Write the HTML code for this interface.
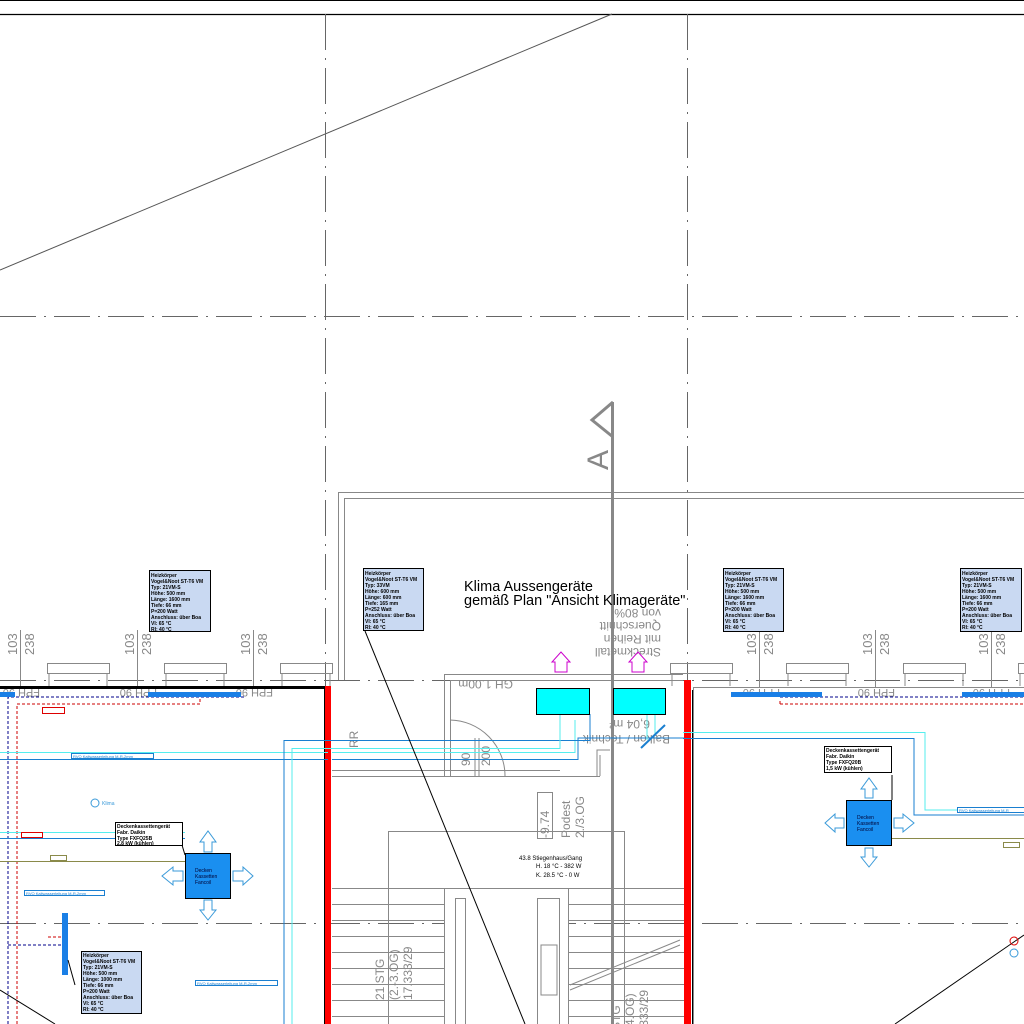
<!DOCTYPE html>
<html><head><meta charset="utf-8"><style>
html,body{margin:0;padding:0;background:#fff;width:1024px;height:1024px;overflow:hidden}
svg{display:block}
text{font-family:"Liberation Sans",sans-serif}
.t{font-size:5px;font-weight:bold;fill:#000}
.dim{font-size:13px;fill:#888}
</style></head><body>
<svg width="1024" height="1024" viewBox="0 0 1024 1024" xmlns="http://www.w3.org/2000/svg">
<rect width="1024" height="1024" fill="#fff"/>
<!-- top border -->
<line x1="0" y1="0.5" x2="1024" y2="0.5" stroke="#000"/>
<line x1="0" y1="14.5" x2="1024" y2="14.5" stroke="#000" stroke-width="1.2"/>
<line x1="0" y1="270" x2="612" y2="14" stroke="#555" stroke-width="1"/>
<!-- axis dash-dot lines -->
<g stroke="#666" stroke-width="1" stroke-dasharray="36,8,2,8">
<line x1="325.5" y1="14" x2="325.5" y2="690"/>
<line x1="687.5" y1="14" x2="687.5" y2="690"/>
<line x1="0" y1="316.5" x2="1024" y2="316.5"/>
<line x1="0" y1="680.5" x2="1024" y2="680.5"/>
<line x1="0" y1="923.5" x2="1024" y2="923.5"/>
</g>
<!-- building outline -->
<g stroke="#888" fill="none" stroke-width="1">
<path d="M338.5 680 V492.5 H1024"/>
<path d="M344.5 680 V498.5 H1024"/>
<!-- windows -->
<rect x="47.5" y="663.5" width="62" height="10"/>
<rect x="164.5" y="663.5" width="62" height="10"/>
<rect x="280.5" y="663.5" width="52" height="10"/>
<rect x="670.5" y="663.5" width="62" height="10"/>
<rect x="786.5" y="663.5" width="62" height="10"/>
<rect x="903.5" y="663.5" width="62" height="10"/>
<rect x="1018.5" y="663.5" width="10" height="10"/>
<path d="M49 673v13M107 673v13M166 673v13M224 673v13M282 673v13M330 673v13M672 673v13M730 673v13M788 673v13M846 673v13M905 673v13M963 673v13M1020 673v13"/>
<!-- dim lines -->
<path d="M20.5 630V687M137.5 630V687M253.5 630V687M759.5 630V687M875.5 630V687M991.5 630V687"/>
<!-- right room top -->
<path d="M693.5 1024V687.5H1024"/>
<!-- small room -->
<path d="M444.5 776V674.5H683M450.5 776V680.5H683"/>
<path d="M332 776.5H600M332 770.5H560"/>
<path d="M597 776V750H610M600 776V755"/>
<path d="M450 720 A56 56 0 0 1 505 776"/>
<path d="M475 738V776M479 738V776"/>
<!-- stair -->
<path d="M388.5 1024V831.5H624.5V1024"/>
<path d="M332 888.5H687M332 904.5H687M332 920.5H687M332 936.5H687M332 952.5H687M332 968.5H687M332 984.5H687M332 1000.5H687M332 1016.5H687"/>
<rect x="444.5" y="888.5" width="124" height="140" fill="#fff"/>
<rect x="455.5" y="898.5" width="10" height="130"/>
<rect x="537.5" y="898.5" width="22" height="130"/>
<rect x="541" y="945" width="16" height="50"/>
<path d="M570 985L680 940M570 990L680 945"/>
<rect x="537.5" y="792.5" width="15" height="46"/>
</g>
<!-- stair text -->
<g fill="#888" font-size="12">
<text transform="translate(384,1000) rotate(-90)">21 STG</text>
<text transform="translate(398,1000) rotate(-90)">(2.-3.OG)</text>
<text transform="translate(412,1000) rotate(-90)">17.333/29</text>
<text transform="translate(620,1030) rotate(-90)">STG</text>
<text transform="translate(634,1030) rotate(-90)">-4.OG)</text>
<text transform="translate(648,1030) rotate(-90)">.333/29</text>
<text transform="translate(549,838) rotate(-90)">-9.74</text>
<text transform="translate(570,838) rotate(-90)">Podest</text>
<text transform="translate(584,838) rotate(-90)">2./3.OG</text>
<text transform="translate(490,766) rotate(-90)">200</text>
<text transform="translate(470,766) rotate(-90)">90</text>
<text transform="translate(358,748) rotate(-90)">RR</text>
<text transform="translate(513,680) rotate(180)">GH 1.00m</text>
<text transform="translate(661,609) rotate(180)">von 80%</text>
<text transform="translate(661,622) rotate(180)">Querschnitt</text>
<text transform="translate(661,635) rotate(180)">mit Reihen</text>
<text transform="translate(661,648) rotate(180)">Streckmetall</text>
<text transform="translate(590,700) rotate(180)">200</text>
<text transform="translate(650,720) rotate(180)">6,04 m²</text>
<text transform="translate(670,735) rotate(180)">Balkon / Technik</text>
</g>
<!-- dims text -->
<g class="dim">
<text transform="translate(17,655) rotate(-90)">103</text><text transform="translate(34,655) rotate(-90)">238</text>
<text transform="translate(134,655) rotate(-90)">103</text><text transform="translate(151,655) rotate(-90)">238</text>
<text transform="translate(250,655) rotate(-90)">103</text><text transform="translate(267,655) rotate(-90)">238</text>
<text transform="translate(756,655) rotate(-90)">103</text><text transform="translate(773,655) rotate(-90)">238</text>
<text transform="translate(872,655) rotate(-90)">103</text><text transform="translate(889,655) rotate(-90)">238</text>
<text transform="translate(988,655) rotate(-90)">103</text><text transform="translate(1005,655) rotate(-90)">238</text>
</g>
<g fill="#888" font-size="11">
<text transform="translate(40,689) rotate(180)">FPH 90</text>
<text transform="translate(157,689) rotate(180)">FPH 90</text>
<text transform="translate(273,689) rotate(180)">FPH 90</text>
<text transform="translate(780,689) rotate(180)">FPH 90</text>
<text transform="translate(895,689) rotate(180)">FPH 90</text>
<text transform="translate(1010,689) rotate(180)">FPH 90</text>
</g>
<!-- walls -->
<line x1="0" y1="687.5" x2="328" y2="687.5" stroke="#000" stroke-width="3"/>
<line x1="324.5" y1="687" x2="324.5" y2="1024" stroke="#000" stroke-width="1"/>
<rect x="325" y="686" width="6" height="338" fill="#f00"/>
<rect x="684" y="680" width="7" height="344" fill="#f00"/>
<line x1="692.5" y1="690" x2="692.5" y2="1024" stroke="#000"/>
<!-- section A -->
<line x1="612.5" y1="402" x2="612.5" y2="1024" stroke="#888" stroke-width="3"/>
<path d="M613 402 L592 420 L613 437" stroke="#888" stroke-width="3" fill="none"/>
<text transform="translate(608,470) rotate(-90)" font-size="30" fill="#888">A</text>
<!-- heating lines -->
<g stroke-width="1" fill="none" stroke-dasharray="3,2">
<path d="M8 1024V697H245" stroke="#00008b"/>
<path d="M17 1024V704H200V696" stroke="#c00"/>
<path d="M48 937H64" stroke="#c00"/>
<path d="M8 945H64" stroke="#00008b"/>
<path d="M780 697H1024" stroke="#00008b"/>
<path d="M780 704V700M780 704H1024" stroke="#c00"/>
</g>
<g fill="#1a7fe6">
<rect x="0" y="692" width="15" height="5"/>
<rect x="148" y="692" width="93" height="5"/>
<rect x="731" y="692" width="91" height="5"/>
<rect x="962" y="692" width="62" height="5"/>
<rect x="62" y="913" width="6" height="62"/>
</g>
<!-- pipes -->
<g fill="none" stroke-width="1">
<path d="M0 752.5H328M332 752.5H575V720" stroke="#5ee"/>
<path d="M0 759.5H328M332 759.5H578V738H684" stroke="#1a7fd0"/>
<path d="M284 1024V740.5H590V714" stroke="#1a7fd0"/>
<path d="M292 1024V748.5H560V714" stroke="#5ee"/>
<path d="M0 838.5H185" stroke="#1a7fd0"/>
<path d="M0 832.5H185" stroke="#5ee"/>
<path d="M0 861.5H185" stroke="#8a8a4a"/>
<path d="M683 732.5H925V810H1024" stroke="#5ee"/>
<path d="M683 738.5H914V815H1024" stroke="#1a7fd0"/>
<path d="M892 838.5H1024" stroke="#8a8a4a"/>
<path d="M647 714V740M655 714V735" stroke="#5ee"/>
<path d="M641 748L665 725" stroke="#1a7fd0" stroke-width="2"/>
</g>
<!-- outdoor units -->
<rect x="536.5" y="688.5" width="53" height="26" fill="#0ff" stroke="#000"/>
<rect x="613.5" y="688.5" width="52" height="26" fill="#0ff" stroke="#000"/>
<!-- magenta arrows -->
<g fill="none" stroke="#c0c" stroke-width="1">
<path d="M555 672V662H552L561 652L570 662H567V672Z"/>
<path d="M632 672V662H629L638 652L647 662H644V672Z"/>
</g>
<text x="464" y="591" font-size="14.5">Klima Aussengeräte</text>
<text x="464" y="605" font-size="14.5">gemäß Plan "Ansicht Klimageräte"</text>
<!-- leader lines -->
<g stroke="#000" fill="none" stroke-width="1">
<path d="M365 631L525 1024"/>
<path d="M75 985L68 960"/>
<path d="M0 990L55 1024"/>
<path d="M895 1024L1024 935"/>
<path d="M182 845L185 855"/>
<path d="M892 800V775"/>
</g>
<!-- tags -->
<g>
<rect x="149.5" y="570.5" width="61" height="61" fill="#c9d9f2" stroke="#000"/>
<rect x="363.5" y="568.5" width="60" height="62" fill="#c9d9f2" stroke="#000"/>
<rect x="723.5" y="568.5" width="60" height="63" fill="#c9d9f2" stroke="#000"/>
<rect x="960.5" y="568.5" width="61" height="63" fill="#c9d9f2" stroke="#000"/>
<rect x="81.5" y="951.5" width="60" height="62" fill="#c9d9f2" stroke="#000"/>
</g>
<g class="t">
<text x="151" y="577">Heizkörper</text><text x="151" y="583">Vogel&amp;Noot ST-T6 VM</text><text x="151" y="589">Typ: 21VM-S</text><text x="151" y="595">Höhe: 500 mm</text><text x="151" y="601">Länge: 1600 mm</text><text x="151" y="607">Tiefe: 66 mm</text><text x="151" y="613">P=200 Watt</text><text x="151" y="619">Anschluss: über Boa</text><text x="151" y="625">VI: 65 °C</text><text x="151" y="631">RI: 40 °C</text>
<text x="365" y="575">Heizkörper</text><text x="365" y="581">Vogel&amp;Noot ST-T6 VM</text><text x="365" y="587">Typ: 33VM</text><text x="365" y="593">Höhe: 600 mm</text><text x="365" y="599">Länge: 600 mm</text><text x="365" y="605">Tiefe: 165 mm</text><text x="365" y="611">P=252 Watt</text><text x="365" y="617">Anschluss: über Boa</text><text x="365" y="623">VI: 65 °C</text><text x="365" y="629">RI: 40 °C</text>
<text x="725" y="575">Heizkörper</text><text x="725" y="581">Vogel&amp;Noot ST-T6 VM</text><text x="725" y="587">Typ: 21VM-S</text><text x="725" y="593">Höhe: 500 mm</text><text x="725" y="599">Länge: 1600 mm</text><text x="725" y="605">Tiefe: 66 mm</text><text x="725" y="611">P=200 Watt</text><text x="725" y="617">Anschluss: über Boa</text><text x="725" y="623">VI: 65 °C</text><text x="725" y="629">RI: 40 °C</text>
<text x="962" y="575">Heizkörper</text><text x="962" y="581">Vogel&amp;Noot ST-T6 VM</text><text x="962" y="587">Typ: 21VM-S</text><text x="962" y="593">Höhe: 500 mm</text><text x="962" y="599">Länge: 1600 mm</text><text x="962" y="605">Tiefe: 66 mm</text><text x="962" y="611">P=200 Watt</text><text x="962" y="617">Anschluss: über Boa</text><text x="962" y="623">VI: 65 °C</text><text x="962" y="629">RI: 40 °C</text>
<text x="83" y="957">Heizkörper</text><text x="83" y="963">Vogel&amp;Noot ST-T6 VM</text><text x="83" y="969">Typ: 21VM-S</text><text x="83" y="975">Höhe: 500 mm</text><text x="83" y="981">Länge: 1000 mm</text><text x="83" y="987">Tiefe: 66 mm</text><text x="83" y="993">P=200 Watt</text><text x="83" y="999">Anschluss: über Boa</text><text x="83" y="1005">VI: 65 °C</text><text x="83" y="1011">RI: 40 °C</text>
</g>
<!-- fancoil labels -->
<rect x="115.5" y="822.5" width="67" height="23" fill="#fff" stroke="#000"/>
<g class="t"><text x="117" y="828">Deckenkassettengerät</text><text x="117" y="834">Fabr. Daikin</text><text x="117" y="840">Type FXFQ25B</text><text x="117" y="845">2,8 kW (kühlen)</text></g>
<rect x="824.5" y="746.5" width="67" height="26" fill="#fff" stroke="#000"/>
<g class="t"><text x="826" y="752">Deckenkassettengerät</text><text x="826" y="758">Fabr. Daikin</text><text x="826" y="764">Type FXFQ20B</text><text x="826" y="770">1,5 kW (kühlen)</text></g>
<!-- fancoils -->
<g>
<rect x="185.5" y="853.5" width="45" height="45" fill="#1a8ff0" stroke="#000"/>
<text x="195" y="872" font-size="5" fill="#003">Decken</text><text x="195" y="878" font-size="5" fill="#003">Kassetten</text><text x="195" y="884" font-size="5" fill="#003">Fancoil</text>
<g fill="none" stroke="#3a9ad9">
<path d="M204 852V842H200L208 831L216 842H212V852Z"/>
<path d="M204 900V910H200L208 920L216 910H212V900Z"/>
<path d="M183 871H173V867L162 876L173 885V881H183Z"/>
<path d="M233 871H243V867L253 876L243 885V881H233Z"/>
</g>
<rect x="846.5" y="800.5" width="45" height="45" fill="#1a8ff0" stroke="#000"/>
<text x="857" y="819" font-size="5" fill="#003">Decken</text><text x="857" y="825" font-size="5" fill="#003">Kassetten</text><text x="857" y="831" font-size="5" fill="#003">Fancoil</text>
<g fill="none" stroke="#3a9ad9">
<path d="M865 798V789H861L869 778L877 789H873V798Z"/>
<path d="M865 848V857H861L869 867L877 857H873V848Z"/>
<path d="M844 818H835V814L825 823L835 832V828H844Z"/>
<path d="M894 818H903V814L914 823L903 832V828H894Z"/>
</g>
</g>
<!-- small tags -->
<rect x="42.5" y="707.5" width="22" height="6" fill="none" stroke="#d00"/>
<rect x="21.5" y="832.5" width="21" height="5" fill="none" stroke="#d00"/>
<rect x="50.5" y="855.5" width="16" height="5" fill="none" stroke="#8a8a4a"/>
<rect x="71.5" y="753.5" width="82" height="5" fill="#fff" stroke="#1a7fd0"/>
<rect x="24.5" y="890.5" width="80" height="5" fill="#fff" stroke="#1a7fd0"/>
<rect x="195.5" y="980.5" width="82" height="5" fill="#fff" stroke="#1a7fd0"/>
<rect x="957.5" y="807.5" width="67" height="5" fill="#fff" stroke="#1a7fd0"/>
<rect x="1003.5" y="842.5" width="16" height="5" fill="none" stroke="#8a8a4a"/>
<text x="73" y="758" font-size="4" fill="#1a7fd0">RVO Kaltwasserleitung M-R-2mm</text>
<text x="26" y="895" font-size="4" fill="#1a7fd0">RVO Kaltwasserleitung M-R-2mm</text>
<text x="197" y="985" font-size="4" fill="#1a7fd0">RVO Kaltwasserleitung M-R-2mm</text>
<text x="959" y="812" font-size="4" fill="#1a7fd0">RVO Kaltwasserleitung M-R</text>
<circle cx="95" cy="803" r="4" fill="none" stroke="#3a9ad9"/><text x="102" y="805" font-size="5" fill="#3a9ad9">Klima</text>
<circle cx="1014" cy="941" r="4" fill="none" stroke="#d00"/>
<circle cx="1014" cy="953" r="4" fill="none" stroke="#3a9ad9"/>
<text x="519" y="860" font-size="6" fill="#000">43.8 Stiegenhaus/Gang</text>
<text x="536" y="868" font-size="6" fill="#000">H. 18 °C - 382 W</text>
<text x="536" y="877" font-size="6" fill="#000">K. 28.5 °C - 0 W</text>
</svg>
</body></html>
